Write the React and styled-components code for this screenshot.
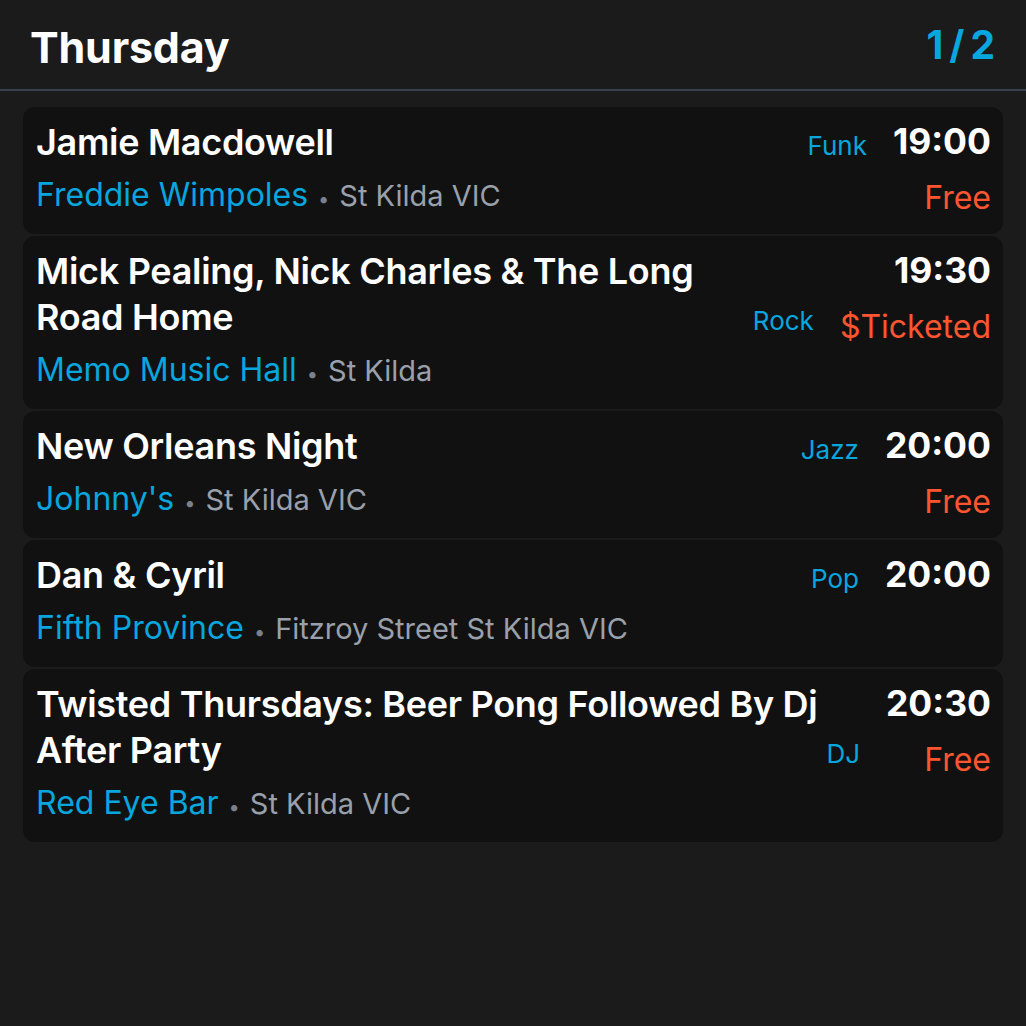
import React from 'react'
import styled, {createGlobalStyle} from 'styled-components'

const events = [
  {
    title: 'Jamie Macdowell',
    venue: 'Freddie Wimpoles',
    place: 'St Kilda VIC',
    genre: 'Funk',
    time: '19:00',
    price: 'Free',
  },
  {
    title: 'Mick Pealing, Nick Charles & The Long Road Home',
    venue: 'Memo Music Hall',
    place: 'St Kilda',
    genre: 'Rock',
    time: '19:30',
    price: '$Ticketed',
  },
  {
    title: 'New Orleans Night',
    venue: "Johnny's",
    place: 'St Kilda VIC',
    genre: 'Jazz',
    time: '20:00',
    price: 'Free',
  },
  {
    title: 'Dan & Cyril',
    venue: 'Fifth Province',
    place: 'Fitzroy Street St Kilda VIC',
    genre: 'Pop',
    time: '20:00',
  },
  {
    title: 'Twisted Thursdays: Beer Pong Followed By Dj After Party',
    venue: 'Red Eye Bar',
    place: 'St Kilda VIC',
    genre: 'DJ',
    time: '20:30',
    price: 'Free',
  },
]

const GlobalStyle = createGlobalStyle`
  html, body {
    margin: 0;
    background: #1b1b1b;
  }
  body {
    font-family: Inter, "Noto Sans", sans-serif;
    color: #fff;
  }
`

const App = () =>
  <Page>
    <GlobalStyle />
    <Header>
      <Day>Thursday</Day>
      <PageCount>1/2</PageCount>
    </Header>
    <List>
      {events.map((event, i) => <EventCard key={i} event={event} />)}
    </List>
  </Page>

const EventCard = ({event}) =>
  <Card>
    <Main>
      <TitleRow>
        <Title>{event.title}</Title>
        <Genre>{event.genre}</Genre>
      </TitleRow>
      <VenueLine>
        <Venue>{event.venue}</Venue>
        <Dot>•</Dot>
        <Place>{event.place}</Place>
      </VenueLine>
    </Main>
    <Side>
      <Time>{event.time}</Time>
      {event.price && <Price>{event.price}</Price>}
    </Side>
  </Card>

const BLUE = '#07a6df'

const Page = styled.div`
  min-height: 1026px;
`

const Header = styled.header`
  box-sizing: border-box;
  display: flex;
  align-items: center;
  justify-content: space-between;
  height: 91px;
  padding: 5px 25px 0 30px;
  border-bottom: 2px solid #3a404b;
`

const Day = styled.h1`
  margin: 0;
  font-size: 43px;
  font-weight: 700;
  letter-spacing: -0.2px;
`

const PageCount = styled.div`
  margin-bottom: 5px;
  font-size: 39px;
  font-weight: 700;
  color: ${BLUE};
  letter-spacing: 6px;
`

const List = styled.div`
  display: flex;
  flex-direction: column;
  gap: 2px;
  padding: 16px 23px;
`

const Card = styled.div`
  display: flex;
  gap: 26px;
  padding: 12px 12px 18px 13px;
  background: #111111;
  border-radius: 12px;
`

const Main = styled.div`
  flex: 1;
  min-width: 0;
`

const TitleRow = styled.div`
  display: flex;
  align-items: last baseline;
  gap: 4px;
`

const Title = styled.div`
  flex: 1;
  font-size: 36px;
  font-weight: 600;
  line-height: 46px;
  letter-spacing: -0.3px;
`

const Genre = styled.div`
  font-size: 26px;
  color: ${BLUE};
`

const VenueLine = styled.div`
  display: flex;
  align-items: baseline;
  height: 42px;
  margin-top: 9px;
  font-size: 32px;
  line-height: 42px;
`

const Venue = styled.span`
  color: ${BLUE};
`

const Dot = styled.span`
  margin: 0 10px;
  font-size: 20px;
  line-height: 1;
  color: #7b808a;
`

const Place = styled.span`
  font-size: 29px;
  line-height: 1;
  color: #9aa0ab;
`

const Side = styled.div`
  display: flex;
  flex-direction: column;
  align-items: flex-end;
`

const Time = styled.div`
  font-size: 35.5px;
  font-weight: 700;
  line-height: 46px;
`

const Price = styled.div`
  margin-top: 15px;
  font-size: 32px;
  line-height: 36px;
  color: #fd5530;
`

export default App
